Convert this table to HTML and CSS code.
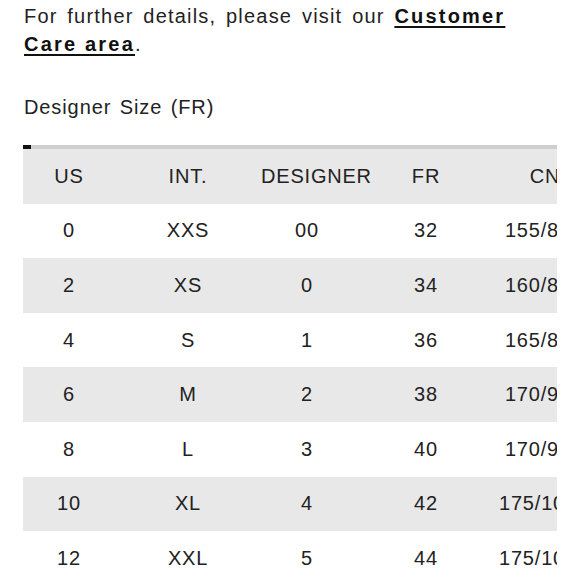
FILE: index.html
```html
<!DOCTYPE html>
<html>
<head>
<meta charset="utf-8">
<link rel="stylesheet" href="styles.css">
</head>
<body>
<div class="page">
  <p class="intro">For further details, please visit our <a class="link" href="#">Customer Care area</a>.</p>
  <h2 class="title">Designer Size (FR)</h2>
  <div class="scroller">
    <div class="track"><div class="thumb"></div></div>
    <div class="viewport">
      <table class="sizes">
        <thead>
          <tr><th>US</th><th>INT.</th><th>DESIGNER</th><th>FR</th><th>CN</th><th>UK</th></tr>
        </thead>
        <tbody>
          <tr><td>0</td><td>XXS</td><td>00</td><td>32</td><td>155/80A</td><td>4</td></tr>
          <tr><td>2</td><td>XS</td><td>0</td><td>34</td><td>160/84A</td><td>6</td></tr>
          <tr><td>4</td><td>S</td><td>1</td><td>36</td><td>165/88A</td><td>8</td></tr>
          <tr><td>6</td><td>M</td><td>2</td><td>38</td><td>170/92A</td><td>10</td></tr>
          <tr><td>8</td><td>L</td><td>3</td><td>40</td><td>170/96A</td><td>12</td></tr>
          <tr><td>10</td><td>XL</td><td>4</td><td>42</td><td>175/100A</td><td>14</td></tr>
          <tr><td>12</td><td>XXL</td><td>5</td><td>44</td><td>175/104A</td><td>16</td></tr>
        </tbody>
      </table>
    </div>
  </div>
</div>
</body>
</html>
```
FILE: styles.css
```css
html, body {
  margin: 0;
  padding: 0;
  background: #ffffff;
}
body {
  font-family: "Liberation Sans", Arial, sans-serif;
  color: #222222;
  overflow: hidden;
}
.page {
  padding: 0 23px 0 24px;
}
.intro {
  margin: 0;
  padding-top: 2px;
  font-size: 20px;
  line-height: 28px;
  letter-spacing: 1.2px;
  word-spacing: 3px;
}
.link {
  color: #111111;
  font-weight: bold;
  letter-spacing: 2.2px;
  word-spacing: 0;
  text-decoration: underline;
  text-decoration-thickness: 2px;
  text-underline-offset: 3px;
}
.title {
  margin: 35px 0 0 0;
  font-size: 20px;
  font-weight: normal;
  line-height: 28px;
  letter-spacing: 0.9px;
  word-spacing: 2px;
}
.scroller {
  margin-top: 24px;
  margin-left: -1px;
}
.track {
  height: 4px;
  background: #cfcfcf;
}
.thumb {
  width: 8px;
  height: 4px;
  background: #111111;
}
.viewport {
  overflow: hidden;
}
.sizes {
  border-collapse: collapse;
  table-layout: fixed;
  width: 714px;
  font-size: 20px;
  letter-spacing: 0.8px;
}
.sizes th, .sizes td {
  width: 92px;
  height: 54.6px;
  padding: 0 27px 0 0;
  text-align: center;
  font-weight: normal;
  white-space: nowrap;
}
.sizes thead tr,
.sizes tbody tr:nth-child(even) {
  background: #e8e8e8;
}
```
